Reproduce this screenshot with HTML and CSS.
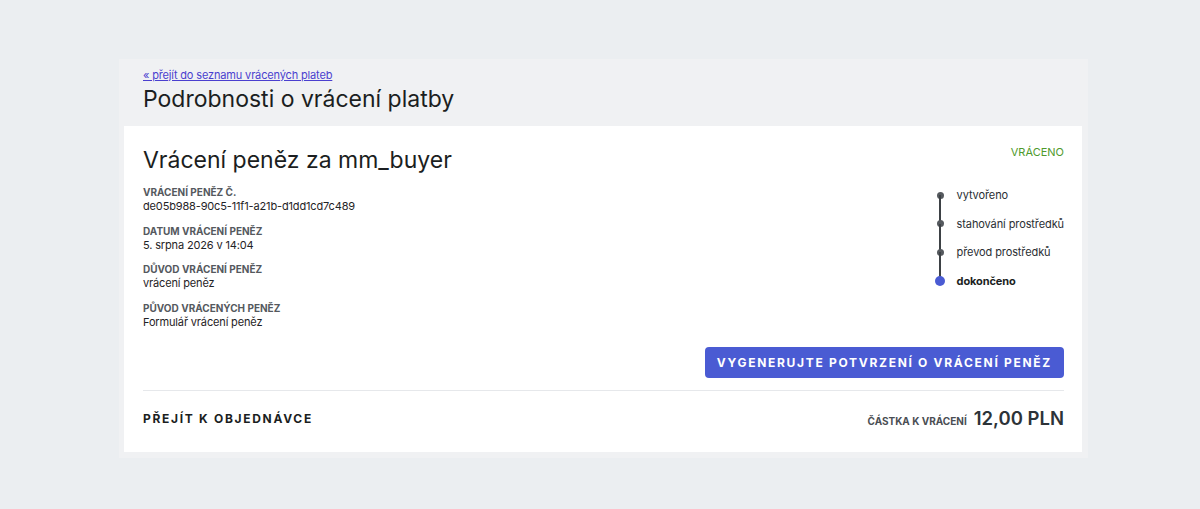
FILE: index.html
```html
<!DOCTYPE html>
<html lang="cs">
<head>
<meta charset="utf-8">
<title>Podrobnosti o vrácení platby</title>
<link rel="stylesheet" href="styles.css">
</head>
<body>
<div class="page">
  <div class="panel">
    <header class="panel-head">
      <a class="back" href="#">« přejít do seznamu vrácených plateb</a>
      <h1 class="page-title">Podrobnosti o vrácení platby</h1>
    </header>
    <section class="card">
      <div class="card-top">
        <div class="info">
          <h2 class="refund-title">Vrácení peněz za mm_buyer</h2>
          <dl class="fields">
            <div class="field">
              <dt>Vrácení peněz č.</dt>
              <dd>de05b988-90c5-11f1-a21b-d1dd1cd7c489</dd>
            </div>
            <div class="field">
              <dt>Datum vrácení peněz</dt>
              <dd>5. srpna 2026 v 14:04</dd>
            </div>
            <div class="field">
              <dt>Důvod vrácení peněz</dt>
              <dd>vrácení peněz</dd>
            </div>
            <div class="field">
              <dt>Původ vrácených peněz</dt>
              <dd>Formulář vrácení peněz</dd>
            </div>
          </dl>
        </div>
        <div class="status">
          <div class="status-label">VRÁCENO</div>
          <ol class="timeline">
            <li class="step">vytvořeno</li>
            <li class="step">stahování prostředků</li>
            <li class="step">převod prostředků</li>
            <li class="step current">dokončeno</li>
          </ol>
        </div>
      </div>
      <div class="actions">
        <button class="btn-primary" type="button">Vygenerujte potvrzení o vrácení peněz</button>
      </div>
      <div class="card-foot">
        <a class="order-link" href="#">Přejít k objednávce</a>
        <div class="amount">
          <span class="amount-label">Částka k vrácení</span>
          <span class="amount-value">12,00 PLN</span>
        </div>
      </div>
    </section>
  </div>
</div>
</body>
</html>
```

FILE: styles.css
```css
* { box-sizing: border-box; }
html, body { margin: 0; padding: 0; }
body {
  background: #ebeef1;
  font-family: Inter, "Noto Sans", "Liberation Sans", sans-serif;
  color: #1f2326;
}
.page {
  padding: 59px 112px 0 119px;
}
.panel {
  background: #f0f1f3;
  padding: 0 6px 6px 5px;
}
.panel-head {
  padding: 9px 0 13px 19px;
}
.back {
  display: block;
  font-size: 11px;
  line-height: 14px;
  letter-spacing: -0.15px;
  color: #4a3fcf;
  text-decoration: underline;
}
.page-title {
  margin: 3px 0 0;
  font-size: 23px;
  line-height: 28px;
  font-weight: 400;
  color: #1b1e21;
}
.card {
  background: #fff;
  padding: 20px 18px 20px 19px;
}
.card-top {
  display: flex;
  justify-content: space-between;
}
.refund-title {
  margin: 0;
  font-size: 23px;
  line-height: 28px;
  font-weight: 400;
  color: #1b1e21;
}
.fields {
  margin: 12px 0 0;
  display: flex;
  flex-direction: column;
  gap: 11.7px;
}
.field dt {
  font-size: 10px;
  line-height: 12px;
  font-weight: 700;
  text-transform: uppercase;
  color: #55595e;
}
.field dd {
  margin: 1px 0 0;
  font-size: 11px;
  line-height: 14px;
  letter-spacing: -0.15px;
  color: #1f2326;
}
.status {
  display: flex;
  flex-direction: column;
  align-items: flex-end;
}
.status-label {
  margin-top: -1px;
  font-size: 11px;
  line-height: 14px;
  color: #4f9a2c;
}
.timeline {
  list-style: none;
  margin: 29px 0 0;
  padding: 0;
}
.step {
  position: relative;
  height: 28.5px;
  line-height: 14px;
  padding-left: 23px;
  font-size: 11px;
  letter-spacing: -0.1px;
  white-space: nowrap;
  color: #2a2e33;
}
.step::before {
  content: "";
  position: absolute;
  left: 3px;
  top: 3.5px;
  width: 7px;
  height: 7px;
  border-radius: 50%;
  background: #55595e;
}
.step::after {
  content: "";
  position: absolute;
  left: 5.5px;
  top: 7px;
  width: 2px;
  height: 28.5px;
  background: #3d4145;
}
.step.current::after { display: none; }
.step.current {
  font-weight: 700;
  color: #1b1e21;
}
.step.current::before {
  left: 1.5px;
  top: 2px;
  width: 10px;
  height: 10px;
  background: #4a5bd3;
  z-index: 1;
}
.actions {
  display: flex;
  justify-content: flex-end;
  margin-top: 18px;
  padding-bottom: 12px;
  border-bottom: 1px solid #e6e8eb;
}
.btn-primary {
  height: 31px;
  padding: 0 12px;
  border: 0;
  border-radius: 4px;
  background: #4a5bd3;
  color: #fff;
  font-family: inherit;
  font-size: 12px;
  font-weight: 700;
  letter-spacing: 1.7px;
  text-transform: uppercase;
  cursor: pointer;
}
.card-foot {
  display: flex;
  justify-content: space-between;
  align-items: center;
  padding-top: 13px;
}
.order-link {
  font-size: 12px;
  font-weight: 700;
  letter-spacing: 1.7px;
  text-transform: uppercase;
  color: #1b1e21;
  text-decoration: none;
}
.amount {
  display: flex;
  align-items: baseline;
  gap: 7px;
}
.amount-label {
  font-size: 10px;
  font-weight: 700;
  text-transform: uppercase;
  color: #4a4e53;
}
.amount-value {
  font-size: 18.5px;
  line-height: 28px;
  font-weight: 600;
  color: #2d3338;
}
```
